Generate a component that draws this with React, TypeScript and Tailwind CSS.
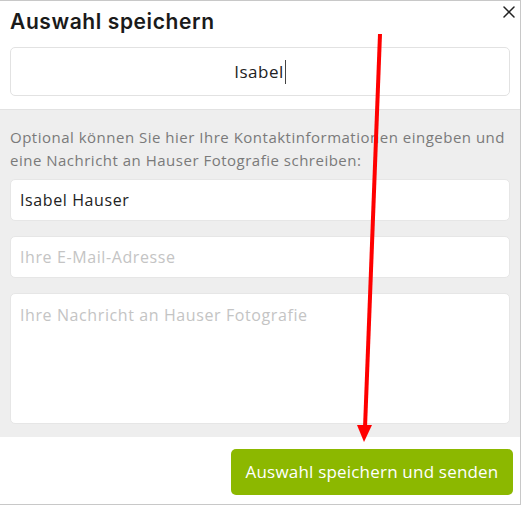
import { X } from 'lucide-react';

export default function App() {
  return (
    <div className="relative w-[521px] h-[505px] bg-white border-t border-r border-b border-[#c8c8c8] overflow-hidden font-['Open_Sans',sans-serif]">
      {/* Header */}
      <div className="px-[10px] pt-[7px] pb-[13px]">
        <h1 className="text-[21px] leading-[28px] font-semibold tracking-[0.6px] text-[#1a1a1a] font-['Inter',sans-serif]">
          Auswahl speichern
        </h1>
        <div className="mt-[11px] h-[49px] rounded-[5px] border border-[#e2e2e2] flex items-center justify-center text-[17px] tracking-[0.5px] text-[#222]">
          <span>Isabel</span>
          <span className="w-px h-[24px] bg-[#444] ml-px" />
        </div>
      </div>
      <button className="absolute right-[1px] top-[1px] text-[#222]">
        <X size={20} strokeWidth={1.8} />
      </button>

      {/* Optional contact */}
      <div className="bg-[#eeeeee] border-t border-[#e2e2e2] px-[10px] pt-[16px] pb-[13px]">
        <p className="text-[15px] leading-[23px] tracking-[0.5px] text-[#7a7a7a]">
          Optional können Sie hier Ihre Kontaktinformationen eingeben und eine Nachricht an Hauser Fotografie schreiben:
        </p>
        <div className="mt-[7px] flex flex-col gap-[15px] tracking-[0.6px]">
          <div className="h-[42px] rounded-[5px] bg-white border border-[#e6e6e6] flex items-center px-[9px] text-[16px] text-[#222]">
            Isabel Hauser
          </div>
          <div className="h-[42px] rounded-[5px] bg-white border border-[#e6e6e6] flex items-center px-[9px] text-[16px] text-[#c4c4c4]">
            Ihre E-Mail-Adresse
          </div>
          <div className="h-[131px] rounded-[5px] bg-white border border-[#e6e6e6] px-[9px] pt-[9px] text-[16px] text-[#c4c4c4]">
            Ihre Nachricht an Hauser Fotografie
          </div>
        </div>
      </div>

      {/* Footer */}
      <div className="flex justify-end pt-[12px] pr-[7px]">
        <button className="h-[46px] w-[282px] rounded-[5px] bg-[#8cb800] text-white text-[17px] tracking-[0.2px]">
          Auswahl speichern und senden
        </button>
      </div>

      {/* Annotation arrow */}
      <svg className="absolute inset-0 pointer-events-none" width="521" height="505">
        <line x1="380" y1="33" x2="365" y2="427" stroke="#ff0000" strokeWidth="4" />
        <polygon points="357,424 372,424 364,441" fill="#ff0000" />
      </svg>
    </div>
  );
}
